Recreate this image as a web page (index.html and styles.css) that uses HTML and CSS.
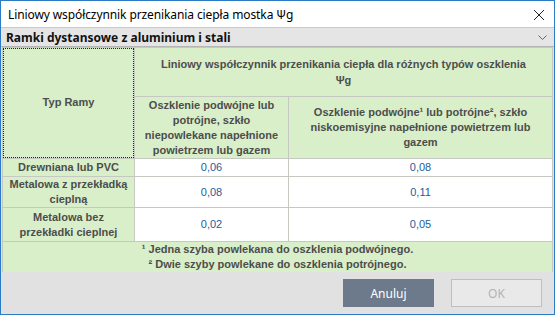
FILE: index.html
```html
<!DOCTYPE html>
<html lang="pl">
<head>
<meta charset="utf-8">
<title>Liniowy współczynnik przenikania ciepła mostka Ψg</title>
<link rel="stylesheet" href="styles.css">
</head>
<body>
<div class="window">
  <div class="titlebar">
    <span class="title">Liniowy współczynnik przenikania ciepła mostka Ψg</span>
    <svg class="close" width="12" height="12" viewBox="0 0 12 12"><path d="M1 1 L11 11 M11 1 L1 11" stroke="#222" stroke-width="1" fill="none"/></svg>
  </div>
  <div class="combo">
    <span class="combo-text">Ramki dystansowe z aluminium i stali</span>
    <svg class="chevron" width="9" height="5" viewBox="0 0 9 5"><path d="M0.5 0.5 L4.5 4.5 L8.5 0.5" stroke="#666" stroke-width="1" fill="none"/></svg>
  </div>
  <div class="table">
    <div class="cell head typ focus">Typ Ramy</div>
    <div class="cell head span2">Liniowy współczynnik przenikania ciepła dla różnych typów oszklenia<br>Ψg</div>
    <div class="cell head">Oszklenie podwójne lub potrójne, szkło niepowlekane napełnione powietrzem lub gazem</div>
    <div class="cell head">Oszklenie podwójne¹ lub potrójne², szkło niskoemisyjne napełnione powietrzem lub gazem</div>

    <div class="cell head">Drewniana lub PVC</div>
    <div class="cell val">0,06</div>
    <div class="cell val">0,08</div>

    <div class="cell head">Metalowa z przekładką cieplną</div>
    <div class="cell val">0,08</div>
    <div class="cell val">0,11</div>

    <div class="cell head">Metalowa bez przekładki cieplnej</div>
    <div class="cell val">0,02</div>
    <div class="cell val">0,05</div>

    <div class="cell head foot">¹ Jedna szyba powlekana do oszklenia podwójnego.<br>² Dwie szyby powlekane do oszklenia potrójnego.</div>
  </div>
  <div class="buttons">
    <button class="btn primary">Anuluj</button>
    <button class="btn disabled" disabled>OK</button>
  </div>
</div>
</body>
</html>
```
FILE: styles.css
```css
html, body {
  margin: 0;
  padding: 0;
  background: #ffffff;
}
.window {
  width: 553px;
  height: 313px;
  border: 1px solid #2b7bc6;
  background: #e1e1e1;
  display: flex;
  flex-direction: column;
  overflow: hidden;
}
.titlebar {
  height: 26px;
  background: #ffffff;
  display: flex;
  align-items: center;
  justify-content: space-between;
  padding: 0 9px 0 7px;
  flex: none;
}
.title {
  font-family: "Noto Sans", "DejaVu Sans", sans-serif;
  font-size: 12px;
  color: #000;
  letter-spacing: -0.1px;
}
.close {
  display: block;
  margin-top: 1px;
}
.combo {
  height: 18px;
  flex: none;
  background: #e5e5e5;
  border-top: 1px solid #c9c9c9;
  border-bottom: 1px solid #b5b5b5;
  display: flex;
  align-items: center;
  justify-content: space-between;
  padding: 0 7px 0 5px;
}
.combo-text {
  font-family: "Noto Sans", "DejaVu Sans", sans-serif;
  font-weight: bold;
  font-size: 12px;
  color: #111;
}
.chevron {
  display: block;
}
.table {
  flex: none;
  margin-left: 1px;
  display: grid;
  grid-template-columns: 131px 153px 263px;
  grid-template-rows: 48px 61px 17px 30px 33px 30px;
  gap: 1px;
  padding: 1px 1px 0 1px;
  background: #c5c9c2;
  width: 551px;
  box-sizing: border-box;
}
.cell {
  font-family: "Liberation Sans", Arial, sans-serif;
  font-size: 11px;
  line-height: 15px;
  display: flex;
  align-items: center;
  justify-content: center;
  text-align: center;
  padding: 0 3px;
}
.head {
  background: #d9efc9;
  color: #4d4d4d;
  font-weight: bold;
}
.typ {
  grid-row: span 2;
}
.focus {
  outline: 1px dotted #222;
  outline-offset: -1px;
  padding-bottom: 1px;
}
.span2 {
  grid-column: span 2;
  line-height: 16px;
  padding: 0 12px;
}
.val {
  background: #ffffff;
  color: #1f5c99;
}
.foot {
  grid-column: span 3;
}
.buttons {
  flex: 1;
  display: flex;
  align-items: center;
  justify-content: flex-end;
  gap: 17px;
  padding: 0 12px 0 0;
}
.btn {
  width: 91px;
  height: 28px;
  font-family: "Noto Sans", "DejaVu Sans", sans-serif;
  font-size: 12px;
  margin: 0;
  padding: 0;
  border-radius: 0;
}
.primary {
  background: #6d7a8b;
  color: #ffffff;
  border: 1px solid #6d7a8b;
}
.disabled {
  background: #e9e9e9;
  color: #b3b3b3;
  border: 1px solid #bfbfbf;
}
```
